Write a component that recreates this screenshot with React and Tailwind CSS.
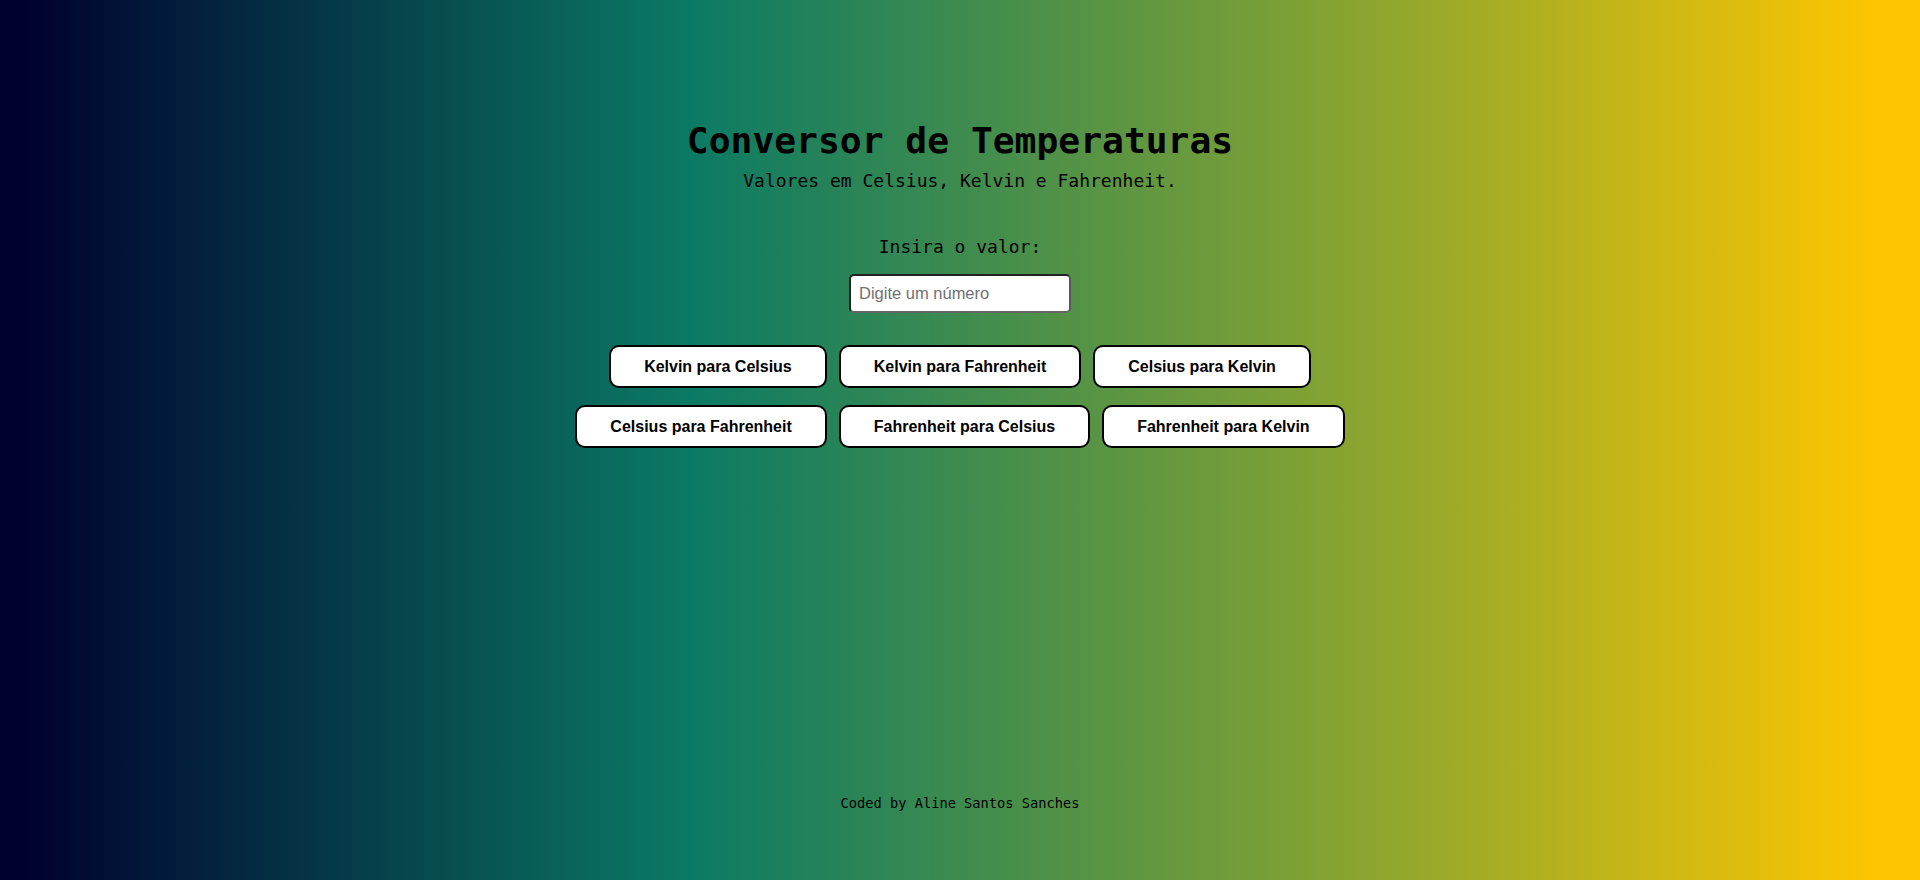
const conversoes = [
  ["Kelvin para Celsius", "Kelvin para Fahrenheit", "Celsius para Kelvin"],
  ["Celsius para Fahrenheit", "Fahrenheit para Celsius", "Fahrenheit para Kelvin"],
];

export default function App() {
  return (
    <div className="min-h-screen flex flex-col items-center bg-[linear-gradient(90deg,#00002e_1%,#0b7a64_36%,#8ea62e_72%,#fec600_98%)] font-['DejaVu_Sans_Mono',monospace] text-black">
      <h1 className="pt-[119px] text-[36.3px] leading-[44px] font-bold">
        Conversor de Temperaturas
      </h1>
      <p className="mt-[6px] text-[18px] leading-[24px]">
        Valores em Celsius, Kelvin e Fahrenheit.
      </p>

      <label className="mt-[42px] text-[18px] leading-[24px]">
        Insira o valor:
      </label>
      <input
        type="text"
        placeholder="Digite um número"
        className="mt-[15px] w-[222px] h-[39px] px-[8px] bg-white rounded-[5px] border-2 border-t-[#222] border-l-[#222] border-r-[#555] border-b-[#666] font-['Liberation_Sans',sans-serif] text-[16.5px] placeholder:text-[#707070] outline-none"
      />

      <div className="mt-[32px] flex flex-col items-center gap-[17px]">
        {conversoes.map((linha, i) => (
          <div key={i} className="flex gap-[12px]">
            {linha.map((texto) => (
              <button
                key={texto}
                className="h-[43px] px-[33px] bg-white border-2 border-black rounded-[10px] font-['Liberation_Sans',sans-serif] font-bold text-[16px] text-black"
              >
                {texto}
              </button>
            ))}
          </div>
        ))}
      </div>

      <footer className="mt-auto mb-[67px] text-[13.7px] leading-[20px]">
        Coded by Aline Santos Sanches
      </footer>
    </div>
  );
}
